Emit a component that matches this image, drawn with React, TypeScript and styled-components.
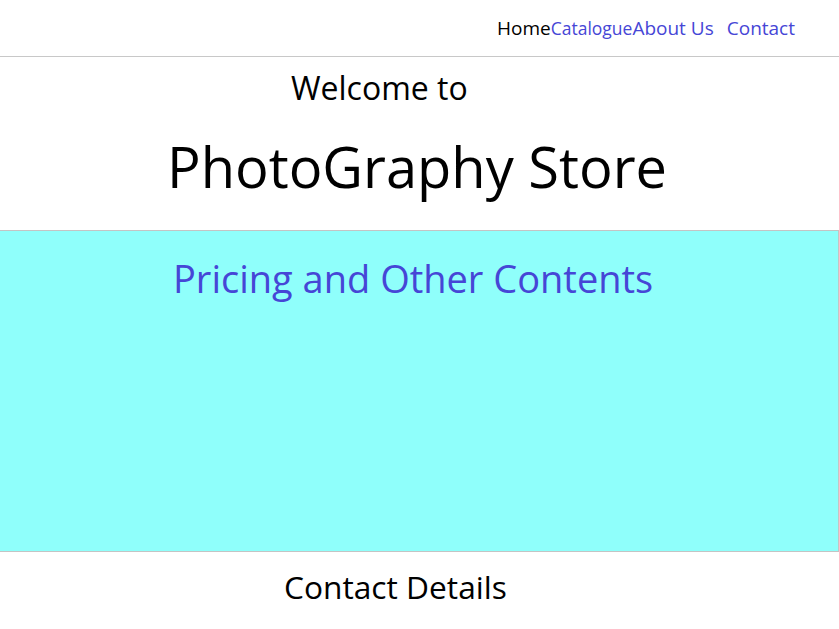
import React from "react";
import styled, { createGlobalStyle } from "styled-components";

const GlobalStyle = createGlobalStyle`
  html, body {
    margin: 0;
    padding: 0;
    background: #ffffff;
  }
  body {
    font-family: "Open Sans", "Noto Sans", sans-serif;
    color: #000000;
  }
`;

const Header = styled.header`
  height: 56px;
  border-bottom: 1px solid #c8c8c8;
  display: flex;
  justify-content: flex-end;
  align-items: flex-start;
  padding-right: 44px;
`;

const Nav = styled.nav`
  display: flex;
  align-items: baseline;
  padding-top: 17px;
`;

const NavLink = styled.a<{ $size?: number; $dark?: boolean; $gap?: number }>`
  font-size: ${(p) => p.$size ?? 19}px;
  color: ${(p) => (p.$dark ? "#000000" : "#4646d6")};
  text-decoration: none;
  line-height: 1.2;
  margin-left: ${(p) => p.$gap ?? 0}px;
`;

const Hero = styled.section`
  height: 173px;
  display: flex;
  flex-direction: column;
`;

const Welcome = styled.h2`
  margin: 12px 0 0 291px;
  font-size: 32px;
  font-weight: 400;
  line-height: 1.2;
`;

const Title = styled.h1`
  margin: 26px 0 0 167px;
  font-size: 56px;
  font-weight: 400;
  line-height: 1.2;
`;

const Pricing = styled.section`
  height: 320px;
  background: #8ffffb;
  border: 1px solid #c4c4c4;
  border-left: none;
`;

const PricingTitle = styled.h2`
  margin: 25px 0 0 173px;
  font-size: 38px;
  font-weight: 400;
  color: #4646d6;
  line-height: 1.2;
`;

const Footer = styled.footer`
  padding-top: 16px;
`;

const FooterTitle = styled.h2`
  margin: 0 0 0 284px;
  font-size: 31.7px;
  font-weight: 400;
  line-height: 1.2;
`;

export default function App() {
  return (
    <>
      <GlobalStyle />
      <Header>
        <Nav>
          <NavLink $dark $size={19}>Home</NavLink>
          <NavLink $size={17.5}>Catalogue</NavLink>
          <NavLink $size={19}>About Us</NavLink>
          <NavLink $size={19} $gap={13}>Contact</NavLink>
        </Nav>
      </Header>
      <Hero>
        <Welcome>Welcome to</Welcome>
        <Title>PhotoGraphy Store</Title>
      </Hero>
      <Pricing>
        <PricingTitle>Pricing and Other Contents</PricingTitle>
      </Pricing>
      <Footer>
        <FooterTitle>Contact Details</FooterTitle>
      </Footer>
    </>
  );
}
